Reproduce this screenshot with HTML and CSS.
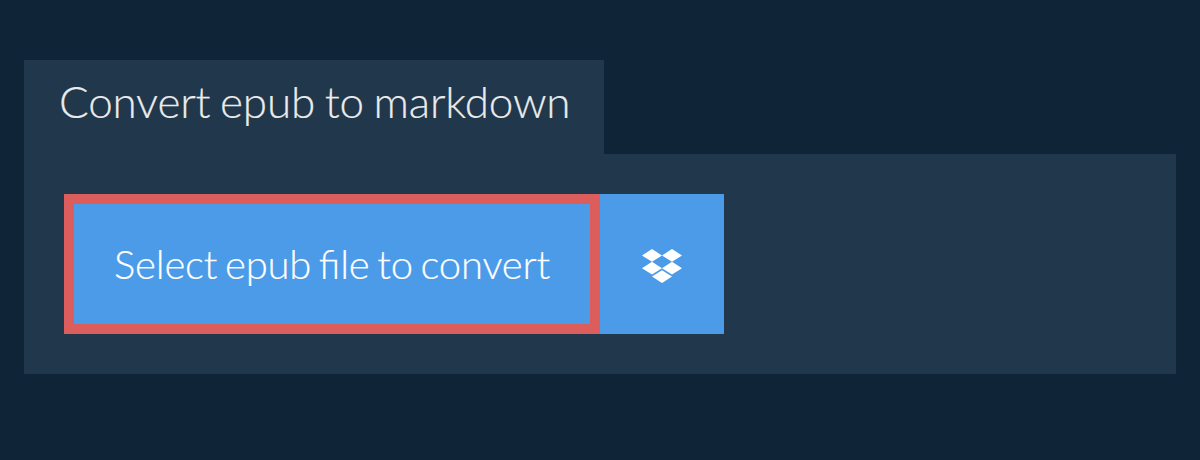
FILE: index.html
```html
<!DOCTYPE html>
<html lang="en">
<head>
    <meta charset="UTF-8">
    <title>Convert epub to markdown</title>
    <link rel="stylesheet" href="styles.css">
</head>
<body>
    <div class="converter">
        <h1 class="tab">Convert epub to markdown</h1>
        <div class="panel">
            <button class="select-btn">Select epub file to convert</button>
            <button class="dropbox-btn" aria-label="Choose from Dropbox">
                <svg class="dropbox-icon" viewBox="0 0 40 34" width="40" height="34">
                    <path fill="#fff" d="M10 0 20 6.4 10 12.8 0 6.4Z"/>
                    <path fill="#fff" d="M30 0 40 6.4 30 12.8 20 6.4Z"/>
                    <path fill="#fff" d="M10 12.8 20 19.2 10 25.6 0 19.2Z"/>
                    <path fill="#fff" d="M30 12.8 40 19.2 30 25.6 20 19.2Z"/>
                    <path fill="#fff" d="M20 21.2 30 27.6 20 34 10 27.6Z"/>
                </svg>
            </button>
        </div>
    </div>
</body>
</html>
```

FILE: styles.css
```css
body {
    margin: 0;
    height: 460px;
    overflow: hidden;
    background: #0f2537;
    font-family: "Lato", "Liberation Sans", sans-serif;
}
.converter {
    padding: 60px 24px 0;
}
.tab {
    box-sizing: border-box;
    width: 580px;
    margin: 0;
    padding: 0 35px;
    height: 94px;
    line-height: 82px;
    white-space: nowrap;
    font-size: 44px;
    font-weight: 300;
    letter-spacing: -0.2px;
    word-spacing: -2px;
    -webkit-text-stroke: 0.2px;
    color: #ebebeb;
    background: #20374c;
}
.panel {
    display: flex;
    height: 140px;
    padding: 40px;
    background: #20374c;
}
button {
    border: none;
    margin: 0;
    padding: 0;
    color: #fff;
    background: #4c9be8;
    font-family: inherit;
    cursor: pointer;
}
.select-btn {
    box-sizing: border-box;
    width: 536px;
    height: 140px;
    border: 10px solid #dc5e5c;
    white-space: nowrap;
    font-size: 40px;
    font-weight: 300;
    letter-spacing: -0.2px;
    word-spacing: -2.9px;
    -webkit-text-stroke: 0.2px;
    font-feature-settings: "liga" 1;
}
.dropbox-btn {
    display: flex;
    align-items: center;
    justify-content: center;
    width: 124px;
    height: 140px;
    padding-top: 4px;
}
```
